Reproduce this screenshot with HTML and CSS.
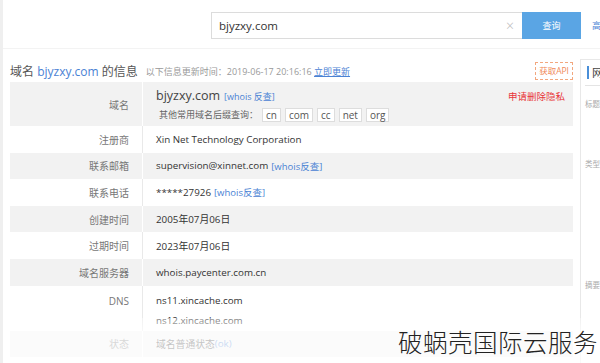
FILE: index.html
```html
<!DOCTYPE html>
<html lang="zh-CN">
<head>
<meta charset="utf-8">
<title>bjyzxy.com 的信息</title>
<link rel="stylesheet" href="styles.css">
</head>
<body>
<div class="page">
  <header class="top">
    <div class="search">
      <div class="search-input">
        <span class="query">bjyzxy.com</span>
        <span class="clear">×</span>
      </div>
      <button class="search-btn">查询</button>
      <a class="adv">高级查询</a>
    </div>
  </header>

  <div class="main">
    <section class="info">
      <div class="info-head">
        <h1 class="title">域名 <span class="blue">bjyzxy.com</span> 的信息</h1>
        <span class="updated">以下信息更新时间：2019-06-17 20:16:16 <a class="blue ul">立即更新</a></span>
        <span class="api">获取API</span>
      </div>

      <div class="table">
        <div class="row gray tall">
          <div class="label">域名</div>
          <div class="value">
            <div class="domain-line">
              <span class="domain">bjyzxy.com</span>
              <a class="small-link">[whois 反查]</a>
              <span class="privacy">申请删除隐私</span>
            </div>
            <div class="suffix-line">
              <span class="suffix-label">其他常用域名后缀查询：</span>
              <span class="tag">cn</span>
              <span class="tag">com</span>
              <span class="tag">cc</span>
              <span class="tag">net</span>
              <span class="tag">org</span>
            </div>
          </div>
        </div>
        <div class="row">
          <div class="label">注册商</div>
          <div class="value">Xin Net Technology Corporation</div>
        </div>
        <div class="row gray">
          <div class="label">联系邮箱</div>
          <div class="value">supervision@xinnet.com <a class="small-link">[whois反查]</a></div>
        </div>
        <div class="row">
          <div class="label">联系电话</div>
          <div class="value">*****27926 <a class="small-link">[whois反查]</a></div>
        </div>
        <div class="row gray">
          <div class="label">创建时间</div>
          <div class="value">2005年07月06日</div>
        </div>
        <div class="row">
          <div class="label">过期时间</div>
          <div class="value">2023年07月06日</div>
        </div>
        <div class="row gray">
          <div class="label">域名服务器</div>
          <div class="value">whois.paycenter.com.cn</div>
        </div>
        <div class="row dns">
          <div class="label">DNS</div>
          <div class="value">
            <div class="dns-line">ns11.xincache.com</div>
            <div class="dns-line">ns12.xincache.com</div>
          </div>
        </div>
        <div class="row gray">
          <div class="label">状态</div>
          <div class="value">域名普通状态<span class="blue">(ok)</span></div>
        </div>
      </div>
    </section>

    <aside class="side">
      <div class="side-head"><span class="side-title">网站信息</span></div>
      <div class="side-item first">标题</div>
      <div class="side-item second">类型</div>
      <div class="side-item third">摘要</div>
    </aside>
  </div>

  <div class="fade"></div>
  <div class="watermark">破蜗壳国际云服务</div>
</div>
</body>
</html>
```

FILE: styles.css
```css
* { box-sizing: border-box; }
html, body {
  margin: 0;
  padding: 0;
  background: #fff;
}
body {
  font-family: "Open Sans", "Noto Sans CJK SC", sans-serif;
  color: #333;
  font-size: 10px;
  width: 600px;
  height: 363px;
  overflow: hidden;
}
a { text-decoration: none; cursor: pointer; }
.blue { color: #4a82d4; }
.ul { text-decoration: underline; }

.page {
  position: relative;
  height: 363px;
  border-left: 3px solid #efefef;
  overflow: hidden;
}

/* top search */
.top {
  height: 49px;
  padding-top: 12px;
  border-bottom: 1px solid #f3f3f3;
}
.search {
  display: flex;
  padding-left: 208px;
  white-space: nowrap;
}
.search-input {
  flex: none;
  width: 311px;
  height: 27px;
  border: 1px solid #dcdcdc;
  border-right: none;
  display: flex;
  align-items: center;
  justify-content: space-between;
  padding: 0 8px 0 7px;
}
.query { font-size: 11.5px; color: #333; }
.clear { color: #bbb; font-size: 14px; font-weight: 300; }
.search-btn {
  flex: none;
  width: 59px;
  height: 27px;
  border: none;
  background: #5aa5e4;
  color: #fff;
  font-family: "Noto Sans CJK SC", sans-serif;
  font-size: 9px;
  padding: 0;
}
.adv {
  flex: none;
  margin-left: 11px;
  line-height: 27px;
  color: #4a82d4;
  font-size: 9px;
}

/* main */
.main {
  display: flex;
  gap: 7px;
  padding: 10px 0 0 7px;
}
.info { width: 563px; flex: none; }
.info-head {
  height: 23px;
  display: flex;
  align-items: center;
  white-space: nowrap;
}
.title {
  margin: 0;
  font-weight: normal;
  font-size: 12px;
  color: #555;
}
.updated {
  margin-left: 8px;
  margin-top: 1px;
  font-size: 9px;
  color: #999;
}
.api {
  margin-left: auto;
  border: 1px dashed #f2a77e;
  color: #f08a5a;
  font-size: 8.5px;
  height: 18px;
  line-height: 16px;
  padding: 0 3px;
  margin-right: 0;
}

.row {
  display: flex;
  height: 26.6px;
  background: #fff;
}
.row.gray { background: #f2f2f2; }
.row.tall { height: 44px; }
.row.dns { height: 45px; }
.label {
  width: 133px;
  flex: none;
  border-right: 1px solid #e9e9e9;
  padding-right: 13px;
  color: #777;
  display: flex;
  align-items: center;
  justify-content: flex-end;
  font-size: 10px;
}
.row.gray .label { border-right-color: #fff; }
.value {
  flex: 1;
  padding-left: 13px;
  display: flex;
  align-items: center;
  color: #333;
  font-size: 9.8px;
  white-space: nowrap;
}
.small-link {
  color: #4a82d4;
  font-size: 9.5px;
  margin-left: 3px;
}
.row.tall .value {
  flex-direction: column;
  align-items: stretch;
  justify-content: center;
  padding-right: 8px;
}
.domain-line {
  display: flex;
  align-items: baseline;
  height: 20px;
}
.domain { font-size: 12.5px; color: #444; }
.domain-line .small-link { font-size: 9px; margin-left: 4px; }
.privacy {
  margin-left: auto;
  color: #e8363a;
  font-size: 9.5px;
  font-family: "Noto Sans CJK SC", sans-serif;
}
.suffix-line {
  display: flex;
  align-items: center;
  gap: 4px;
  margin-top: 1px;
}
.suffix-label {
  font-size: 9px;
  color: #666;
  margin-left: 3px;
  margin-right: 0;
}
.tag {
  background: #fff;
  border: 1px solid #dddddd;
  font-size: 10px;
  line-height: 12px;
  padding: 0 3px;
  color: #555;
}
.row.dns .label { align-items: flex-start; padding-top: 8px; }
.row.dns .value {
  flex-direction: column;
  align-items: flex-start;
  justify-content: flex-start;
  padding-top: 5px;
}
.dns-line { line-height: 20px; }

/* side */
.side {
  flex: none;
  width: 60px;
  height: 320px;
  border: 1px solid #e8e8e8;
  padding: 6px 0 0 4px;
}
.side-head {
  height: 20px;
  border-bottom: 1px solid #e4e4e4;
  padding-left: 2px;
  white-space: nowrap;
}
.side-title {
  border-left: 2px solid #4a8fd8;
  padding-left: 3px;
  font-size: 11.5px;
  color: #444;
  line-height: 13px;
  display: inline-block;
}
.side-item {
  font-size: 7.5px;
  color: #aaa;
  white-space: nowrap;
}
.side-item.first { margin-top: 12px; }
.side-item.second { margin-top: 49px; }
.side-item.third { margin-top: 110px; }

/* overlay */
.fade {
  position: absolute;
  left: -3px;
  right: 0;
  top: 318px;
  bottom: 0;
  background: linear-gradient(to bottom, rgba(255,255,255,0.35), rgba(255,255,255,0.7) 30%, rgba(255,255,255,0.72));
}
.watermark {
  position: absolute;
  right: 2px;
  bottom: 4px;
  font-family: "Noto Sans CJK SC", sans-serif;
  font-weight: 300;
  font-size: 24.5px;
  color: #222;
  letter-spacing: 0.5px;
  white-space: nowrap;
}
```
